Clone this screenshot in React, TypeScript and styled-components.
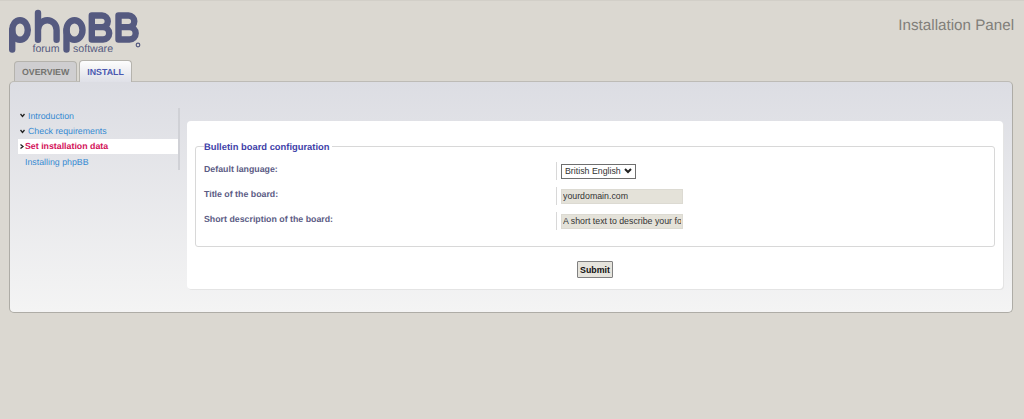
import React from 'react';
import styled, { createGlobalStyle } from 'styled-components';

const GlobalStyle = createGlobalStyle`
    html, body {
        margin: 0;
        padding: 0;
        height: 100%;
        background: #dbd8d1;
        font-family: "Liberation Sans", Arial, sans-serif;
        text-rendering: geometricPrecision;
    }
`;

const steps = [
    { label: 'Introduction', state: 'done' },
    { label: 'Check requirements', state: 'done' },
    { label: 'Set installation data', state: 'active' },
    { label: 'Installing phpBB', state: 'todo' },
];

const chevron =
    "data:image/svg+xml,%3Csvg xmlns='http://www.w3.org/2000/svg' width='8' height='6'%3E%3Cpath d='M1 1l3 3 3-3' fill='none' stroke='%23222' stroke-width='2'/%3E%3C/svg%3E";

const Logo = () => (
    <LogoSvg width="134" height="46" viewBox="8 8 134 46" aria-label="phpBB">
        <g fill="none" stroke="#555a80" strokeWidth="6.4" strokeLinecap="round" strokeLinejoin="round">
            <path d="M12.200 49.500V30" />
            <ellipse cx="20" cy="30" rx="7.800" ry="9.800" />
            <path d="M38 13V39.800M38 30a9.300 9.800 0 0 1 18.600 0V39.800" />
            <path d="M66.500 49.500V30" />
            <ellipse cx="74.500" cy="30" rx="8" ry="9.800" />
            <path d="M91.800 15.500H102a5.800 5.800 0 0 1 0 11.600H91.800M91.800 15.500V39.500H103a6.200 6.200 0 0 0 0-12.400" />
            <path d="M118.500 15.500H128.500a5.800 5.800 0 0 1 0 11.600H118.500M118.500 15.500V39.500H129.500a6.200 6.200 0 0 0 0-12.400" />
        </g>
        <LogoText x="32.500" y="51.500">forum</LogoText>
        <LogoText x="73" y="51.500">software</LogoText>
        <circle cx="138" cy="45" r="1.800" fill="none" stroke="#555a80" strokeWidth="1.200" />
    </LogoSvg>
);

const Marker = ({ open }: { open: boolean }) => (
    <MarkerSvg width="5" height="5" viewBox="0 0 5 5">
        <path
            d={open ? 'M0.500 1L2.500 3.500L4.500 1' : 'M0.500 0.500L3 2.500L0.500 4.500'}
            fill="none"
            stroke="#222"
            strokeWidth="1.300"
        />
    </MarkerSvg>
);

const App = () => {
    return (
        <>
            <GlobalStyle />
            <Page>
                <Header>
                    <Logo />
                    <PanelTitle>Installation Panel</PanelTitle>
                </Header>
                <Tabs>
                    <Tab>OVERVIEW</Tab>
                    <Tab $active>INSTALL</Tab>
                </Tabs>
                <Panel>
                    <Menu>
                        {steps.map((item) => (
                            <MenuItem key={item.label} $active={item.state === 'active'}>
                                {item.state !== 'todo' && <Marker open={item.state === 'done'} />}
                                <MenuLabel $state={item.state}>{item.label}</MenuLabel>
                            </MenuItem>
                        ))}
                    </Menu>
                    <Main>
                        <Fields>
                            <Legend>Bulletin board configuration</Legend>
                            <Row>
                                <Label>Default language:</Label>
                                <Control>
                                    <Select defaultValue="en">
                                        <option value="en">British English</option>
                                    </Select>
                                </Control>
                            </Row>
                            <Row>
                                <Label>Title of the board:</Label>
                                <Control>
                                    <TextInput defaultValue="yourdomain.com" />
                                </Control>
                            </Row>
                            <Row>
                                <Label>Short description of the board:</Label>
                                <Control>
                                    <TextInput defaultValue="A short text to describe your forum" />
                                </Control>
                            </Row>
                        </Fields>
                        <Actions>
                            <SubmitButton type="button">Submit</SubmitButton>
                        </Actions>
                    </Main>
                </Panel>
            </Page>
        </>
    );
};

const Page = styled.div`
    min-height: 419px;
    box-sizing: border-box;
    padding: 0 11px 0 9px;
    border-top: 1px solid #d2cfc8;
    overflow: hidden;
`;

const Header = styled.div`
    height: 59px;
    display: flex;
    justify-content: space-between;
    align-items: flex-start;
`;

const LogoSvg = styled.svg`
    display: block;
    margin: 7px 0 0 -1px;
`;

const LogoText = styled.text`
    font-family: "Liberation Sans", Arial, sans-serif;
    font-size: 10.600px;
    fill: #555a80;
`;

const PanelTitle = styled.div`
    margin: 16px -1px 0 0;
    font-size: 15.200px;
    line-height: 18px;
    color: #817f7a;
`;

const Tabs = styled.div`
    height: 21px;
    display: flex;
    align-items: flex-end;
    gap: 2px;
    padding-left: 5px;
`;

const Tab = styled.div<{ $active?: boolean }>`
    box-sizing: border-box;
    height: ${(p) => (p.$active ? '22px' : '20px')};
    margin-bottom: ${(p) => (p.$active ? '-1px' : '0')};
    padding: 0 7px;
    display: flex;
    align-items: center;
    position: relative;
    z-index: ${(p) => (p.$active ? 1 : 0)};
    border: 1px solid #b5b3ad;
    border-bottom: none;
    border-radius: 4px 4px 0 0;
    background: ${(p) => (p.$active ? 'linear-gradient(#fdfdfd, #dfe0e7)' : '#cfced0')};
    color: ${(p) => (p.$active ? '#4a58b0' : '#74736f')};
    font-size: 8.800px;
    font-weight: bold;
`;

const Panel = styled.div`
    box-sizing: border-box;
    height: 232px;
    display: flex;
    align-items: flex-start;
    gap: 7px;
    padding: 26px 9px 0 8px;
    border: 1px solid #aeaca6;
    border-top-color: #bdbbb6;
    border-radius: 5px;
    background: linear-gradient(#dcdde3, #f4f4f4);
`;

const Menu = styled.ul`
    list-style: none;
    width: 162px;
    flex: none;
    box-sizing: border-box;
    margin: 0;
    padding: 0;
    border-right: 2px solid #d0d1d6;
`;

const MenuItem = styled.li<{ $active: boolean }>`
    height: 15.400px;
    display: flex;
    align-items: center;
    gap: ${(p) => (p.$active ? '0' : '3px')};
    padding-left: 2px;
    background: ${(p) => (p.$active ? '#fff' : 'transparent')};
    font-size: 8.800px;
`;

const MarkerSvg = styled.svg`
    flex: none;
`;

const MenuLabel = styled.span<{ $state: string }>`
    margin-left: ${(p) => (p.$state === 'todo' ? '5px' : '0')};
    color: ${(p) => (p.$state === 'active' ? '#d3135a' : '#368ad2')};
    font-weight: ${(p) => (p.$state === 'active' ? 'bold' : 'normal')};
`;

const Main = styled.div`
    flex: 1;
    margin-top: 13px;
    height: 168px;
    box-sizing: border-box;
    padding: 20px 8px 0;
    background: #fff;
    border-radius: 4px;
    box-shadow: 1px 1px 0 #e4e4e4;
`;

const Fields = styled.fieldset`
    box-sizing: border-box;
    height: 106px;
    margin: 0;
    padding: 4px 8px 0;
    border: 1px solid #d8d8d8;
    border-radius: 3px;
`;

const Legend = styled.legend`
    padding: 0 2px 0 0;
    color: #3f3fa8;
    font-size: 9.400px;
    font-weight: bold;
`;

const Row = styled.div`
    height: 25px;
    display: flex;
    align-items: flex-start;
`;

const Label = styled.label`
    width: 352px;
    flex: none;
    padding-top: 8px;
    line-height: 10px;
    color: #5c5c85;
    font-size: 8.800px;
    font-weight: bold;
`;

const Control = styled.div`
    height: 18px;
    margin-top: 6px;
    display: flex;
    align-items: center;
    padding-left: 4px;
    border-left: 1px solid #d8d8d8;
`;

const Select = styled.select`
    appearance: none;
    box-sizing: border-box;
    height: 15px;
    width: 75px;
    padding: 0 0 0 3px;
    font-family: inherit;
    font-size: 8.800px;
    color: #333;
    background: #fff url("${chevron}") no-repeat right 3px center;
    border: 1px solid #6e6e6e;
    border-radius: 0;
`;

const TextInput = styled.input`
    box-sizing: border-box;
    width: 122px;
    height: 15px;
    padding: 0 1px;
    font-family: inherit;
    font-size: 8.800px;
    color: #333;
    background: #e4e2d9;
    border: 1px solid #dcdad2;
    outline: none;
`;

const Actions = styled.div`
    margin-top: 14px;
    display: flex;
    justify-content: center;
`;

const SubmitButton = styled.button`
    box-sizing: border-box;
    width: 36px;
    height: 17px;
    padding: 0;
    font-family: inherit;
    font-size: 8.800px;
    font-weight: bold;
    color: #111;
    background: #e6e4dd;
    border: 1px solid #808080;
    border-radius: 1px;
`;

export default App;
